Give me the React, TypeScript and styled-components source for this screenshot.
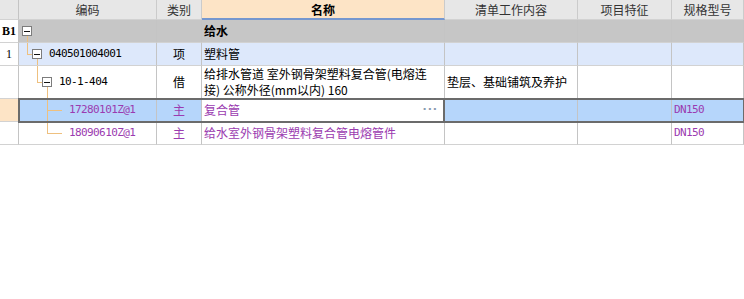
import React from 'react';
import styled, { createGlobalStyle } from 'styled-components';

const GlobalStyle = createGlobalStyle`
	html, body {
		margin: 0;
		padding: 0;
		background: #ffffff;
		overflow: hidden;
	}
	body {
		font-family: 'Noto Sans CJK SC', 'Noto Sans', sans-serif;
		font-size: 12px;
		color: #000;
	}
`;

const COLS = '138px 45px 243px 133px 94px 1fr';

const Sheet = styled.div`
	width: 744px;
	height: 299px;
	background: #fff;
	overflow: hidden;
`;

const Row = styled.div<{ $h: number }>`
	display: flex;
	height: ${(p) => p.$h}px;
`;

const RowHead = styled.div<{ $bg?: string; $bold?: boolean }>`
	box-sizing: border-box;
	width: 19px;
	flex: none;
	display: flex;
	align-items: center;
	justify-content: center;
	background: ${(p) => p.$bg || '#fff'};
	border-right: 1px solid #c4c4c4;
	border-bottom: 1px solid #d2d2d2;
	font-family: 'Liberation Serif', serif;
	font-weight: ${(p) => (p.$bold ? 'bold' : 'normal')};
	font-size: 12px;
`;

const RowBody = styled.div<{ $bg?: string; $selected?: boolean }>`
	flex: 1;
	display: grid;
	grid-template-columns: ${COLS};
	background: ${(p) => p.$bg || '#fff'};
	position: ${(p) => (p.$selected ? 'relative' : 'static')};
	z-index: ${(p) => (p.$selected ? 1 : 'auto')};
	outline: ${(p) => (p.$selected ? '2px solid #6b6b6b' : 'none')};
	outline-offset: -1px;
`;

const HeadCell = styled.div<{ $active?: boolean }>`
	box-sizing: border-box;
	display: flex;
	align-items: center;
	justify-content: center;
	background: ${(p) => (p.$active ? '#fde4c6' : '#e7e7e7')};
	border-right: 1px solid #cbcbcb;
	border-bottom: ${(p) => (p.$active ? '2px solid #7597cf' : '1px solid #d2d2d2')};
	color: ${(p) => (p.$active ? '#000' : '#333')};
	font-weight: ${(p) => (p.$active ? 'bold' : 'normal')};
	white-space: nowrap;
	overflow: hidden;
`;

const Cell = styled.div<{ $center?: boolean; $color?: string; $bold?: boolean; $bg?: string }>`
	box-sizing: border-box;
	display: flex;
	align-items: center;
	justify-content: ${(p) => (p.$center ? 'center' : 'flex-start')};
	padding: 0 2px;
	background: ${(p) => p.$bg || 'transparent'};
	color: ${(p) => p.$color || '#000'};
	font-weight: ${(p) => (p.$bold ? 'bold' : 'normal')};
	border-right: 1px solid #c4c4c4;
	border-bottom: 1px solid #d2d2d2;
	white-space: nowrap;
	overflow: hidden;
	line-height: 16px;
`;

const EditCell = styled(Cell)`
	background: #fff;
	border-right: 2px solid #6b6b6b;
	justify-content: space-between;
	padding-right: 5px;
`;

const More = styled.span`
	color: #8a9bb0;
	font-size: 11px;
	letter-spacing: 1px;
	font-family: 'DejaVu Sans', sans-serif;
	font-weight: bold;
`;

const CodeCell = styled(Cell)`
	padding: 0;
	align-items: stretch;
`;

const CodeText = styled.span<{ $color?: string }>`
	align-self: center;
	font-family: 'DejaVu Sans Mono', monospace;
	font-size: 11px;
	letter-spacing: -0.6px;
	color: ${(p) => p.$color || '#000'};
`;

const Spec = styled.span`
	font-family: 'DejaVu Sans Mono', monospace;
	font-size: 11px;
	letter-spacing: -0.6px;
	color: #9b3bb0;
`;

const TreeSvg = styled.svg`
	flex: none;
	display: block;
`;

type TreeProps = { w: number; h: number; lines: string; box?: [number, number] };

function Tree({ w, h, lines, box }: TreeProps) {
	return (
		<TreeSvg width={w} height={h} viewBox={`0 0 ${w} ${h}`}>
			<path d={lines} stroke="#eec07f" strokeWidth={1} fill="none" shapeRendering="crispEdges" />
			{box ? (
				<g shapeRendering="crispEdges">
					<rect x={box[0] + 0.5} y={box[1] + 0.5} width={9} height={9} fill="#fff" stroke="#7c7c7c" />
					<path d={`M${box[0] + 2} ${box[1] + 5.5}h6`} stroke="#111" />
				</g>
			) : null}
		</TreeSvg>
	);
}

const PURPLE = '#9b3bb0';

export default function App() {
	return (
		<Sheet>
			<GlobalStyle />
			<Row $h={20}>
				<RowHead $bg="#e7e7e7" />
				<RowBody $bg="#e7e7e7">
					<HeadCell>编码</HeadCell>
					<HeadCell>类别</HeadCell>
					<HeadCell $active>名称</HeadCell>
					<HeadCell>清单工作内容</HeadCell>
					<HeadCell>项目特征</HeadCell>
					<HeadCell>规格型号</HeadCell>
				</RowBody>
			</Row>

			<Row $h={23}>
				<RowHead $bold>B1</RowHead>
				<RowBody $bg="#c6c6c6">
					<CodeCell>
						<Tree w={20} h={22} lines="M8.5 16V22" box={[3, 6]} />
					</CodeCell>
					<Cell />
					<Cell $bold>给水</Cell>
					<Cell />
					<Cell />
					<Cell />
				</RowBody>
			</Row>

			<Row $h={23}>
				<RowHead>1</RowHead>
				<RowBody $bg="#dde8fb">
					<CodeCell>
						<Tree w={30} h={22} lines="M8.5 0V11.5H13M18.5 16V22" box={[13, 6]} />
						<CodeText>040501004001</CodeText>
					</CodeCell>
					<Cell $center>项</Cell>
					<Cell>塑料管</Cell>
					<Cell />
					<Cell />
					<Cell />
				</RowBody>
			</Row>

			<Row $h={33}>
				<RowHead />
				<RowBody>
					<CodeCell>
						<Tree w={40} h={32} lines="M18.5 0V16.5H23M28.5 21V32" box={[23, 11]} />
						<CodeText>10-1-404</CodeText>
					</CodeCell>
					<Cell $center>借</Cell>
					<Cell>
						<span>
							给排水管道 室外钢骨架塑料复合管(电熔连
							<br />
							接) 公称外径(mm以内) 160
						</span>
					</Cell>
					<Cell>垫层、基础铺筑及养护</Cell>
					<Cell />
					<Cell />
				</RowBody>
			</Row>

			<Row $h={23}>
				<RowHead $bg="#fde4c6" />
				<RowBody $bg="#b6d6fb" $selected>
					<CodeCell>
						<Tree w={50} h={22} lines="M28.5 0V22M28.5 11.5H43" />
						<CodeText $color={PURPLE}>17280101Z@1</CodeText>
					</CodeCell>
					<Cell $center $color={PURPLE}>主</Cell>
					<EditCell $color={PURPLE}>
						<span>复合管</span>
						<More>···</More>
					</EditCell>
					<Cell />
					<Cell />
					<Cell>
						<Spec>DN150</Spec>
					</Cell>
				</RowBody>
			</Row>

			<Row $h={23}>
				<RowHead />
				<RowBody>
					<CodeCell>
						<Tree w={50} h={22} lines="M28.5 0V11.5H43" />
						<CodeText $color={PURPLE}>18090610Z@1</CodeText>
					</CodeCell>
					<Cell $center $color={PURPLE}>主</Cell>
					<Cell $color={PURPLE}>给水室外钢骨架塑料复合管电熔管件</Cell>
					<Cell />
					<Cell />
					<Cell>
						<Spec>DN150</Spec>
					</Cell>
				</RowBody>
			</Row>
		</Sheet>
	);
}
